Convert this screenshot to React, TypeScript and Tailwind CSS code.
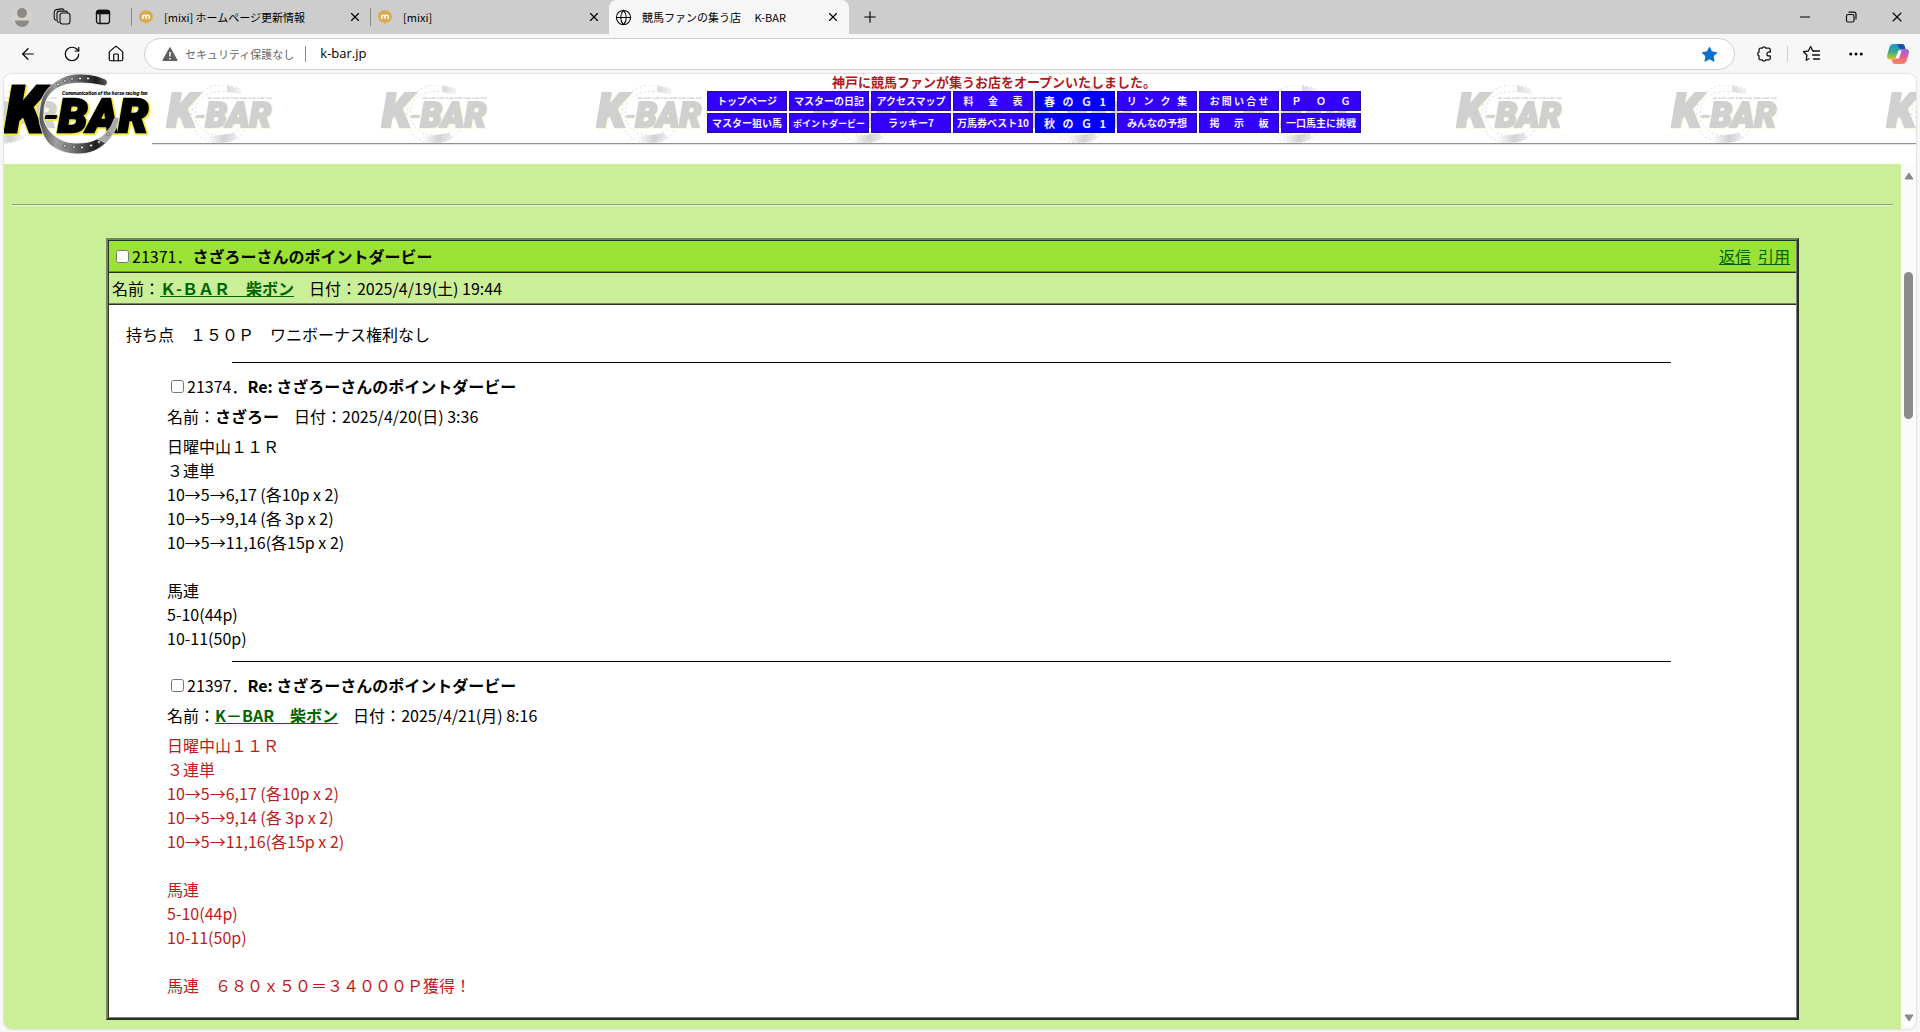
import { ArrowLeft, RotateCw, House, X, Plus, Minus, Ellipsis, Globe } from 'lucide-react';

type Reply = {
  no: string;
  title: string;
  name: string;
  linked?: boolean;
  date: string;
  color: string;
  lines: string[];
};

const bets = [
  '日曜中山１１Ｒ',
  '３連単',
  '10→5→6,17 (各10p x 2)',
  '10→5→9,14 (各 3p x 2)',
  '10→5→11,16(各15p x 2)',
  '',
  '馬連',
  '5-10(44p)',
  '10-11(50p)',
];

const replies: Reply[] = [
  {
    no: '21374',
    title: 'Re: さざろーさんのポイントダービー',
    name: 'さざろー',
    date: '2025/4/20(日) 3:36',
    color: 'text-black',
    lines: bets,
  },
  {
    no: '21397',
    title: 'Re: さざろーさんのポイントダービー',
    name: 'K－BAR　柴ボン',
    linked: true,
    date: '2025/4/21(月) 8:16',
    color: 'text-[#bf1a1a]',
    lines: [...bets, '', '馬連　６８０ｘ５０＝３４０００Ｐ獲得！'],
  },
];

const blue = 'border-[#2a108c] bg-[#3300ff] text-[10px]';
const blueSmall = 'border-[#2a108c] bg-[#3300ff] text-[9px]';
const g1 = 'border-[#0a0aa0] bg-[#0000ff] text-[11px]';

const navItems = [
  { label: 'トップページ', style: blue },
  { label: 'マスターの日記', style: blue },
  { label: 'アクセスマップ', style: blue },
  { label: '料　  金　  表', style: blue },
  { label: '春   の   Ｇ   1', style: g1 },
  { label: 'リ   ン   ク   集', style: blue },
  { label: 'お 問 い 合 せ', style: blue },
  { label: 'Ｐ　  Ｏ　  Ｇ', style: blue },
  { label: 'マスター狙い馬', style: blue },
  { label: 'ポイントダービー', style: blueSmall },
  { label: 'ラッキー7', style: blue },
  { label: '万馬券ベスト10', style: blue },
  { label: '秋   の   Ｇ   1', style: g1 },
  { label: 'みんなの予想', style: blue },
  { label: '掲　  示　  板', style: blue },
  { label: '一口馬主に挑戦', style: blue },
];

const MixiIcon = () => (
  <svg viewBox="0 0 16 16" className="h-4 w-4 shrink-0">
    <path d="M8 1.2c4 0 6.9 2.7 6.9 6.3 0 3.4-2.4 5.8-5.7 6.2L7.6 15l-.4-1.3C3.600 13.400 1 11 1 7.500 1 3.900 4 1.200 8 1.200z" fill="#d8ab50" />
    <path d="M4.800 10V6.200M4.800 7.500c.3-1.700 3.200-1.700 3.200 0V10M8 7.500c.3-1.700 3.200-1.700 3.200 0V10" fill="none" stroke="#fff" strokeWidth="1.400" />
  </svg>
);

const Tab = ({ label }: { label: string }) => (
  <div className="flex h-[18px] w-[239px] items-center border-l border-[#8a8a8a] pr-2 pl-[6px]">
    <MixiIcon />
    <span className="ml-[10px] flex-1 truncate text-[11px]">{label}</span>
    <button type="button" aria-label="タブを閉じる">
      <X className="h-[14px] w-[14px]" strokeWidth={2} />
    </button>
  </div>
);

const TabBar = () => (
  <div className="flex h-[34px] items-center bg-[#cdcdcd]">
    <div className="flex w-[131px] items-center gap-5 pl-[11px]">
      <button type="button" aria-label="プロファイル">
        <svg viewBox="0 0 22 22" className="h-[22px] w-[22px]">
          <circle cx="11" cy="11" r="10.500" fill="#d4d1cd" />
          <circle cx="11" cy="7" r="5" fill="#8d8a86" />
          <path d="M4 14.500h14c0 3.500-3 6.500-7 6.500s-7-3-7-6.500z" fill="#8d8a86" />
        </svg>
      </button>
      <button type="button" aria-label="ワークスペース">
        <svg viewBox="0 0 18 18" className="h-[18px] w-[18px]" fill="none" stroke="#111" strokeWidth="1.100" strokeLinejoin="round" strokeLinecap="round">
          <rect x="7" y="5" width="10" height="11" rx="2.500" />
          <path d="M5.800 14.500C4.600 14.300 4 13.500 4 12.300V5.500C4 4 4.800 3.100 6.300 3.100h6.200c1 0 1.700.4 2.100 1.100" />
          <path d="M2.900 12.300C1.800 11.900 1.200 11.200 1.200 10V4.300c0-1.600.7-2.300 2-2.700L8.700.9c1-.1 1.700.2 2.100.9" />
        </svg>
      </button>
      <button type="button" aria-label="タブ操作メニュー" className="ml-1">
        <svg viewBox="0 0 16 16" className="h-4 w-4" fill="none" stroke="#111" strokeWidth="1.300">
          <rect x="1.500" y="1.500" width="13" height="13" rx="2.500" />
          <path d="M1.500 3.500a2 2 0 0 1 2-2h9a2 2 0 0 1 2 2v1.200h-13z" fill="#111" />
          <path d="M5 5v9.500" />
        </svg>
      </button>
    </div>
    <Tab label="[mixi] ホームページ更新情報" />
    <Tab label="[mixi]" />
    <div className="flex h-full w-[240px] items-center rounded-t-lg bg-[#f7f7f7] pr-[9px] pl-[6px]">
      <Globe className="h-[17px] w-[17px] shrink-0" strokeWidth={1.5} />
      <span className="ml-[10px] flex-1 truncate text-[11px] whitespace-pre">競馬ファンの集う店　 K-BAR</span>
      <button type="button" aria-label="タブを閉じる">
        <X className="h-[14px] w-[14px]" strokeWidth={2} />
      </button>
    </div>
    <button type="button" aria-label="新しいタブ" className="ml-3">
      <Plus className="h-[18px] w-[18px]" strokeWidth={1.5} />
    </button>
    <div className="ml-auto flex items-center gap-[30px] pr-[15px]">
      <button type="button" aria-label="最小化">
        <Minus className="h-4 w-4" strokeWidth={1.5} />
      </button>
      <button type="button" aria-label="元に戻す">
        <svg viewBox="0 0 16 16" className="h-4 w-4" fill="none" stroke="#111" strokeWidth="1.200">
          <rect x="3.500" y="5.500" width="7.500" height="7.500" rx="1.500" />
          <path d="M5.500 3.200h5.500a2 2 0 0 1 2 2v5.300" />
        </svg>
      </button>
      <button type="button" aria-label="閉じる">
        <X className="h-4 w-4" strokeWidth={1.6} />
      </button>
    </div>
  </div>
);

const AddressBar = () => (
  <div className="flex h-10 items-center bg-[#f7f7f7] pr-[10px] pl-[19px]">
    <div className="flex w-[125px] items-center gap-[26px]">
      <button type="button" aria-label="戻る">
        <ArrowLeft className="h-[18px] w-[18px]" strokeWidth={1.6} />
      </button>
      <button type="button" aria-label="更新">
        <RotateCw className="h-[18px] w-[18px]" strokeWidth={1.6} />
      </button>
      <button type="button" aria-label="ホーム">
        <House className="h-[18px] w-[18px]" strokeWidth={1.6} />
      </button>
    </div>
    <div className="flex h-8 flex-1 items-center rounded-full border border-[#d0d0d0] bg-white pr-4 pl-[17px]">
      <svg viewBox="0 0 16 16" className="h-4 w-4 shrink-0">
        <path d="M8 1.500 15.200 14.500H.8z" fill="#606060" stroke="#606060" strokeLinejoin="round" />
        <path d="M8 6v4.500M8 12v1.400" stroke="#fff" strokeWidth="1.500" />
      </svg>
      <span className="ml-[7px] text-[11px] text-[#666]">セキュリティ保護なし</span>
      <span className="mx-[11px] h-4 w-px shrink-0 bg-[#8a8a8a]" />
      <input
        aria-label="アドレス"
        defaultValue="k-bar.jp"
        className="ml-[3px] min-w-0 flex-1 bg-transparent font-['Open_Sans',sans-serif] text-[13px] outline-none"
      />
      <button type="button" aria-label="お気に入りに登録済み">
        <svg viewBox="0 0 18 18" className="h-[17px] w-[17px]">
          <path d="m9 1.300 2.400 4.900 5.400.8-3.900 3.800.9 5.400L9 13.600l-4.800 2.600.9-5.400L1.200 7l5.400-.8z" fill="#0b6ecb" stroke="#0b6ecb" strokeLinejoin="round" />
        </svg>
      </button>
    </div>
    <div className="ml-5 flex items-center">
      <button type="button" aria-label="拡張機能">
        <svg viewBox="0 0 18 18" className="h-[18px] w-[18px]" fill="none" stroke="#111" strokeWidth="1.300" strokeLinejoin="round">
          <path d="M5.500 3.200h1.700a1.900 1.900 0 0 1 3.600 0h3a1.500 1.500 0 0 1 1.500 1.500v2.400h-1.500a1.900 1.900 0 0 0 0 3.800h1.500v2.400a1.500 1.500 0 0 1-1.500 1.500h-3a1.900 1.900 0 0 1-3.600 0H5.500A1.500 1.500 0 0 1 4 13.300v-2.500a1.900 1.900 0 0 1 0-3.600V4.700a1.500 1.500 0 0 1 1.500-1.500z" />
        </svg>
      </button>
      <span className="mx-[14px] h-4 w-px bg-[#d0d0d0]" />
      <button type="button" aria-label="お気に入り">
        <svg viewBox="0 0 20 18" className="h-[18px] w-5" fill="none" stroke="#111" strokeWidth="1.300" strokeLinejoin="round" strokeLinecap="round">
          <path d="M11.500 6.200 10.800 6 8.600 1.500 6.400 6l-4.900.7L5 10.200l-.8 5L7 13.700" />
          <path d="M11.500 6h6M10.500 10h7M11.500 14h6" />
        </svg>
      </button>
      <button type="button" aria-label="設定など" className="ml-[25px]">
        <Ellipsis className="h-[18px] w-[18px]" strokeWidth={2} />
      </button>
      <button type="button" aria-label="Copilot" className="ml-[21px]">
        <svg viewBox="0 0 24 22" className="h-[22px] w-6">
          <defs>
            <linearGradient id="cpLeft" x1="0" y1="0" x2="0" y2="1">
              <stop offset="0" stopColor="#159bd8" />
              <stop offset="0.500" stopColor="#38a88a" />
              <stop offset="1" stopColor="#e8c51c" />
            </linearGradient>
            <linearGradient id="cpRight" x1="0" y1="0" x2="0" y2="1">
              <stop offset="0" stopColor="#9a66e0" />
              <stop offset="0.500" stopColor="#e35aa0" />
              <stop offset="1" stopColor="#fb8a52" />
            </linearGradient>
          </defs>
          <path d="M8 1h8c1.600 0 2.300 1 2.800 2.500L19.400 6h-3c-2 0-3 1-3.600 3l-1.600 5c-.5 1.500-1.500 2.500-3.200 2.500H4C1.500 16.500.6 14.500 1.200 12L3.500 4C4.200 2 5.500 1 8 1z" fill="url(#cpLeft)" />
          <path d="M11 1h5c1.600 0 2.300 1 2.800 2.500L19.400 6h-3.600c-2 0-2.800-.6-3.200-2z" fill="#1b4fb5" />
          <path d="M16 21H9c-1.600 0-2.300-1-2.800-2.500L5.600 16.500H8c1.700 0 2.700-1 3.200-2.500l1.600-5c.6-2 1.600-3 3.600-3H20c2.500 0 3.400 2 2.800 4.500L20.500 18c-.7 2-2 3-4.500 3z" fill="url(#cpRight)" />
          <path d="M12.500 7.500h3l-2.500 8H9.500z" fill="#fff" />
        </svg>
      </button>
    </div>
  </div>
);

const shoePath =
  'M101 12C104 10 104 7 101 5C92 1 84 0 74 0C65 0 58 3 51 8C43 14 37 23 36 33C35 41 34 46 37 54C39 62 43 69 49 73C57 78 65 80 74 80C86 80 95 76 103 68C109 62 113 54 115 46C115 43 112 42 110 45C108 50 107 53 104 56C101 60 98 63 93 65C87 68 81 69 74 69C66 69 60 68 54 64C48 60 45 57 43 53C40 48 39 44 40 39C40 33 41 28 44 23C47 18 51 15 56 13C62 10 69 9 76 9C85 9 92 10 101 12z';

const Logo = () => (
  <svg viewBox="0 0 148 81" className="h-[81px] w-[148px] shrink-0" role="img" aria-label="K-BAR">
    <defs>
      <linearGradient id="shoe" gradientUnits="userSpaceOnUse" x1="36" y1="0" x2="116" y2="0">
        <stop offset="0" stopColor="#555" />
        <stop offset="0.200" stopColor="#a0a0a0" />
        <stop offset="0.400" stopColor="#777" />
        <stop offset="0.700" stopColor="#1c1c1c" />
        <stop offset="0.900" stopColor="#777" />
        <stop offset="1" stopColor="#ddd" />
      </linearGradient>
    </defs>
    <g fontFamily="Roboto, sans-serif" fontWeight="900" fontStyle="italic">
      <g fill="#000" stroke="#000" strokeWidth="3" className="[filter:drop-shadow(2px_1px_0_#f4e83e)_drop-shadow(-1px_1px_0_#f4e83e)]">
        <text x="1" y="58" fontSize="65">K</text>
      </g>
      <path d={shoePath} fill="url(#shoe)" stroke="#fff" strokeWidth="0.800" />
      <g fill="#000" stroke="#000" strokeWidth="2.500" className="[filter:drop-shadow(2px_1px_0_#f4e83e)_drop-shadow(-1px_1px_0_#f4e83e)]">
        <path d="M42 41.500h11l-1 3H41z" strokeWidth="1" />
        <text x="54" y="58" fontSize="47">BAR</text>
      </g>
      <text x="58" y="21" fontSize="5">Communication of the horse racing fan</text>
    </g>
    <path d="M115 46C115 43 112 42 110 45C108 50 107 53 104 56C101 60 98 63 93 65L102 69C109 62 113 54 115 46z" fill="#a8a8a8" stroke="#fff" strokeWidth="0.500" />
    <g fill="#f2f2f2" stroke="#222" strokeWidth="0.600">
      <circle cx="54" cy="10.500" r="1.400" />
      <circle cx="61" cy="7" r="1.400" />
      <circle cx="68" cy="5" r="1.400" />
      <circle cx="76" cy="4.500" r="1.400" />
      <circle cx="84" cy="4.500" r="1.400" />
      <circle cx="61" cy="72" r="1.400" />
      <circle cx="70" cy="73" r="1.400" />
      <circle cx="78" cy="73.500" r="1.400" />
      <circle cx="87" cy="71.500" r="1.400" />
      <circle cx="95" cy="68" r="1.400" />
      <circle cx="104" cy="60" r="1.400" />
    </g>
  </svg>
);

const Watermark = () => (
  <svg className="absolute inset-0 h-full w-full" aria-hidden="true">
    <defs>
      <linearGradient id="mark" x1="0" y1="0" x2="1" y2="0">
        <stop offset="0" stopColor="#fff" />
        <stop offset="0.500" stopColor="#d2d2d2" />
        <stop offset="1" stopColor="#f4f4f4" />
      </linearGradient>
      <pattern id="kbar" x="162" y="11" width="215" height="100" patternUnits="userSpaceOnUse">
        <svg width="108" height="59" viewBox="0 0 148 81">
          <path d={shoePath} fill="#fff" stroke="#dcdcdc" strokeWidth="1.300" strokeDasharray="3 3" />
          <path d="M84 1l17 4q4 3 0 7l-17-3zM56 70l18 -1 20-3 4 7q-20 10-40 4z" fill="url(#mark)" />
          <g
            fontFamily="Roboto, sans-serif"
            fontWeight="900"
            fontStyle="italic"
            fill="#d0d0d0"
            stroke="#d0d0d0"
            strokeWidth="3"
            className="[filter:drop-shadow(1px_1px_0_#f7f7d4)]"
          >
            <text x="1" y="58" fontSize="65">K</text>
            <path d="M42 41.500h11l-1 3H41z" strokeWidth="1" />
            <text x="54" y="58" fontSize="47">BAR</text>
          </g>
          <path d="M57 18h88" stroke="#ccc" strokeWidth="1.500" strokeDasharray="6 2 3 1" />
        </svg>
      </pattern>
    </defs>
    <rect width="100%" height="70" fill="url(#kbar)" />
  </svg>
);

const SiteHeader = () => (
  <header className="relative flex h-[90px] bg-white">
    <Watermark />
    <div className="relative">
      <Logo />
    </div>
    <div className="relative flex flex-1 flex-col items-center">
      <p className="h-[17px] pr-20 text-[13px] leading-4 font-bold text-[#b3191c]">
        神戸に競馬ファンが集うお店をオープンいたしました。
      </p>
      <nav className="grid grid-cols-8 gap-[2px]">
        {navItems.map((item) => (
          <a
            key={item.label}
            href="#"
            className={`flex h-5 w-20 items-center justify-center border leading-none font-bold whitespace-pre text-[#f4f0ff] ${item.style}`}
          >
            {item.label}
          </a>
        ))}
      </nav>
      <hr className="mt-[10px] h-[2px] w-full border-t border-b border-t-[#8f8f95] border-b-[#e6e6e6]" />
    </div>
  </header>
);

const ReplyPost = ({ reply }: { reply: Reply }) => (
  <article>
    <hr className="mr-[125px] ml-[123px] border-t border-black" />
    <div className="mt-[11px] ml-[58px]">
      <label className="flex items-center">
        <input type="checkbox" className="mr-[3px] ml-1 h-[13px] w-[13px]" />
        <span>{reply.no}．</span>
        <b>{reply.title}</b>
      </label>
      <p className="mt-[6px]">
        名前：
        {reply.linked ? (
          <a href="#" className="font-bold text-[#006400] underline">{reply.name}</a>
        ) : (
          <b>{reply.name}</b>
        )}
        <span className="ml-[15px]">日付：{reply.date}</span>
      </p>
      <div className={`mt-[6px] ${reply.color}`}>
        {reply.lines.map((line, i) => (
          <p key={i} className="min-h-6">{line}</p>
        ))}
      </div>
    </div>
  </article>
);

const Thread = () => (
  <section className="mx-auto w-[90%] border-2 border-t-[#758560] border-r-[#26331f] border-b-[#26331f] border-l-[#758560]">
    <div className="border border-t-[#26331f] border-r-[#808080] border-b-[#808080] border-l-[#26331f] bg-white">
      <div className="flex items-center justify-between bg-[#9ae234] p-[3px]">
        <label className="flex items-center">
          <input type="checkbox" className="mr-[3px] ml-1 h-[13px] w-[13px]" />
          <span>21371．</span>
          <b>さざろーさんのポイントダービー</b>
        </label>
        <div className="flex gap-[7px] pr-[3px] text-[#006400]">
          <a href="#" className="underline">返信</a>
          <a href="#" className="underline">引用</a>
        </div>
      </div>
      <hr className="h-[2px] border-t border-b border-t-[#758560] border-b-[#26331f]" />
      <p className="bg-[#cbef98] p-[3px]">
        名前：
        <a href="#" className="font-bold text-[#006400] underline">Ｋ-ＢＡＲ　柴ボン</a>
        <span className="ml-[15px]">日付：2025/4/19(土) 19:44</span>
      </p>
      <hr className="h-[2px] border-t border-b border-t-[#758560] border-b-[#26331f]" />
      <div className="flex flex-col gap-[11px] pt-[17px] pb-5">
        <p className="mb-[5px] pl-[17px]">持ち点　１５０Ｐ　ワニボーナス権利なし</p>
        {replies.map((reply) => (
          <ReplyPost key={reply.no} reply={reply} />
        ))}
      </div>
    </div>
  </section>
);

const Scrollbar = () => (
  <div className="flex w-[15px] shrink-0 flex-col items-center bg-[#fbfbfb] pt-2 pb-[7px]" aria-hidden="true">
    <svg viewBox="0 0 10 8" className="h-2 w-[10px]">
      <path d="M5 1 9 7H1z" fill="#8a8a8a" stroke="#8a8a8a" strokeLinejoin="round" />
    </svg>
    <div className="mt-[92px] h-[147px] w-[9px] rounded-full bg-[#8a8a8a]" />
    <svg viewBox="0 0 10 8" className="mt-auto h-2 w-[10px]">
      <path d="M5 7 9 1H1z" fill="#8a8a8a" stroke="#8a8a8a" strokeLinejoin="round" />
    </svg>
  </div>
);

const App = () => {
  return (
    <div className="flex min-h-screen flex-col bg-[#f7f7f7] font-['Noto_Sans_CJK_JP',sans-serif] text-black">
      <TabBar />
      <AddressBar />
      <div className="mx-1 mb-1 flex flex-1 flex-col overflow-hidden rounded-lg bg-white shadow-[0_0_2px_rgba(0,0,0,0.3)]">
        <SiteHeader />
        <div className="flex flex-1">
          <main className="flex-1 bg-[#cbef98] px-2 pt-10 pb-[9px] text-base leading-6">
            <hr className="mb-8 h-[2px] border-t border-b border-t-[#8c9a86] border-b-[#e4f7c8]" />
            <Thread />
          </main>
          <Scrollbar />
        </div>
      </div>
    </div>
  );
};

export default App;
